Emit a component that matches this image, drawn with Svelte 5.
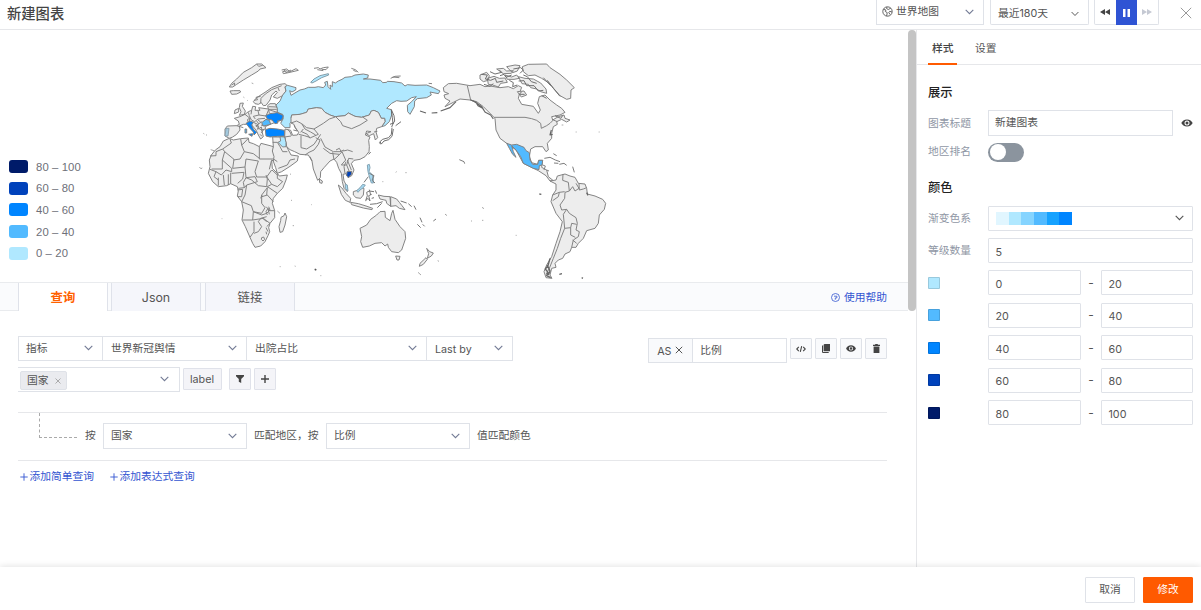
<script>
  const legend = [
    ['#001b69', '80 – 100'],
    ['#0042bb', '60 – 80'],
    ['#0085ff', '40 – 60'],
    ['#52baff', '20 – 40'],
    ['#b0e8ff', '0 – 20']
  ];
  const ramp = ['#e1f6ff', '#b0e8ff', '#85d4ff', '#52baff', '#16a2ff', '#0085ff'];
  const levels = [
    ['#b0e8ff', 0, 20],
    ['#52baff', 20, 40],
    ['#0085ff', 40, 60],
    ['#0042bb', 60, 80],
    ['#001b69', 80, 100]
  ];
</script>

{#snippet chevron(color = '#737b95')}
  <svg class="chev" width="9" height="6" viewBox="0 0 9 6" fill="none" stroke={color} stroke-width="1.1"><path d="M.7.8 4.5 4.7 8.3.8" /></svg>
{/snippet}

{#snippet eye()}
  <svg width="12" height="8" viewBox="0 0 12 8"><path fill="#444" fill-rule="evenodd" d="M6 .5C3.2.5 1.2 2.2.3 4c.9 1.8 2.9 3.5 5.7 3.5S10.800 5.800 11.700 4C10.800 2.200 8.800.5 6 .5ZM6 1.500a2.500 2.500 0 1 1 0 5 2.500 2.500 0 0 1 0-5Z" /><circle cx="6" cy="4" r="1.500" fill="#444" /></svg>
{/snippet}

<div class="page">
  <header>
    <h1>新建图表</h1>
    <div class="pick world">
      <svg width="11" height="11" viewBox="0 0 11 11" fill="none" stroke="#555" stroke-width=".9"><circle cx="5.500" cy="5.500" r="4.700" /><path d="M1.400 3.300 4 4.100 3.300 5.500 5.200 6.600 4.700 10M5 1 4.600 2.600 6.300 3.500 8.700 2.200M10 6 7.700 5.300 6.800 6.500 8 8.500" /></svg>
      <span>世界地图</span>{@render chevron()}
    </div>
    <div class="pick range"><span>最近180天</span>{@render chevron('#555')}</div>
    <div class="player">
      <i><svg width="10" height="6" viewBox="0 0 10 6" fill="#444"><path d="M5 0V6L0 3ZM10 0V6L5 3Z" /></svg></i>
      <i class="on"><svg width="7" height="8" viewBox="0 0 7 8" fill="#fff"><path d="M0 0H2.500V8H0ZM4.500 0H7V8H4.500Z" /></svg></i>
      <i><svg width="10" height="6" viewBox="0 0 10 6" fill="#c5c9d3"><path d="M0 0 5 3 0 6ZM5 0 10 3 5 6Z" /></svg></i>
    </div>
    <svg class="close" width="12" height="12" viewBox="0 0 12 12" stroke="#999" stroke-width="1"><path d="M.8.800 11.200 11.200M11.200.800.8 11.200" /></svg>
  </header>

  <div class="body">
    <main>
      <section class="chart">
        <ul class="legend">
          {#each legend as [color, text]}
            <li><b style="background:{color}"></b>{text}</li>
          {/each}
        </ul>
        <svg class="map" width="430" height="227" viewBox="0 0 1290 681" fill="#ededed" stroke="#808080" stroke-width="2.900" stroke-linejoin="round">
          <!-- Europe -->
          <path d="M118 96 125 85 140 72 160 52 185 38 200 27 215 27 228 38 210 42 205 48 185 60 160 75 140 88 128 96ZM200 27 206 34 218 31M125 90 134 84 133 91M120 108 130 107 150 107 152 111 140 117 125 118Z" />
          <path fill="none" d="M275 45 290 42 300 50 318 41 325 46 300 52 280 56 278 50 292 47M282 45 288 53 303 45M372 40 385 38 390 42 400 38 415 36 408 44 395 43M382 44 400 47" />
          <path d="M190 140 200 128 225 112 245 98 270 88 285 86 292 92 285 96 288 108 278 122 262 130 250 126 262 112 258 108 245 120 240 135 228 151 220 152 214 143 205 148 195 146Z" />
          <path fill="none" d="M212 144 213 130 226 117 245 104 263 97 275 92M264 98 268 108M192 136 203 134 198 127 212 124" />
          <path d="M150 145 160 144 157 154 166 168 163 178 148 181 153 170 148 158ZM135 165 146 160 146 171 133 176Z" />
          <path d="M105 243 105 222 112 213 140 212 148 208 145 198 133 190 150 185 165 178 175 170 185 166 188 154 197 155 195 166 210 166 206 158 235 162 233 152 240 146 256 146 262 160 262 172 280 182 276 195 240 208 226 215 226 222 215 225 220 245 212 252 205 240 198 225 185 210 178 203 168 208 160 208 148 213 150 225 140 238 128 246 118 250Z" />
          <path fill="none" d="M140 212 160 218M165 178 180 190 176 203M175 172 178 182 184 195 194 200 204 192 225 190M185 166 183 178M204 167 207 180 190 184 196 192M207 180 228 183 236 164 262 172M236 155 260 156M235 163 260 163M190 202 203 208 216 200M203 208 205 222 214 216 216 226M204 195 212 201M196 210 206 214 202 224M213 210 225 213M208 222 220 226 214 234M210 238 216 244M236 164 238 175M179 190 173 193 173 200M200 198 206 206 198 216" />
          <path fill="#b0e8ff" stroke="#7e98a5" d="M362 82 372 72 390 62 415 56 416 60 395 68 378 78 366 84Z" />
          <path fill="#b0e8ff" d="M285 95 292 91 300 93 318 98 317 105 306 111 299 107 303 121 318 112 330 105 343 102 355 97 375 97 385 95 400 98 407 90 404 82 412 79 414 95 422 103 420 90 427 95 427 80 436 84 445 78 456 73 465 67 484 65 495 60 520 57 535 60 533 69 520 72 540 72 572 76 578 83 590 82 592 79 612 80 635 84 645 93 652 89 675 91 710 90 730 98 750 108 745 116 720 111 724 120 710 128 682 131 674 138 673 155 660 178 653 170 652 151 665 140 679 125 665 128 650 138 633 139 620 137 605 145 590 160 604 164 605 180 598 200 585 212 575 215 585 200 584 190 574 190 565 172 552 166 544 168 538 180 515 187 495 184 475 174 465 182 435 185 420 180 405 172 395 160 380 158 355 162 350 172 330 178 305 180 303 190 310 195 300 205 300 218 285 218 272 205 280 190 278 178 262 172 262 160 258 150 270 138 278 120 288 108Z" />
          <path fill="none" d="M602 70 615 64 632 63M608 66 628 68M484 40 496 44 505 52M490 46 500 50M716 85 726 86" />
          <path fill="#0085ff" d="M168 205 180 198 190 202 185 210 190 222 200 232 192 240 190 231 178 218 172 210ZM176 238 188 236 186 244ZM227 182 240 176 262 173 280 182 275 195 262 198 264 204 255 206 246 195 232 192ZM226 224 240 220 262 222 283 226 284 243 262 244 240 246 228 243Z" />
          <path fill="#52baff" d="M215 203 228 193 238 196 242 208 220 213ZM165 222 170 222 170 234 165 234Z" />
          <path fill="#a4cbe0" stroke="#8ba0ac" d="M105 243 108 220 117 220 114 243Z" />
          <!-- Asia -->
          <path d="M285 222 302 226 308 241 322 240 326 232 316 218 312 208 303 204 303 190 305 180 330 178 350 172 355 162 380 158 395 160 405 172 420 180 435 185 465 182 475 174 495 184 515 187 538 180 544 168 552 166 565 172 574 190 584 190 585 200 575 215 560 220 558 231 563 248 556 255 551 236 538 242 528 236 543 230 530 228 526 240 540 246 536 256 538 275 537 290 525 305 510 313 492 316 484 326 492 345 485 362 474 368 468 356 459 358 462 378 472 396 472 410 462 400 457 380 454 355 446 340 440 322 432 312 420 318 402 338 392 350 391 368 383 376 370 342 366 318 355 300 330 298 314 290 300 284 290 275 284 246Z" />
          <path d="M248 246 284 246 290 275 303 300 325 303 322 318 300 334 275 350 262 355 257 338 246 308 243 285 250 275Z" />
          <path fill="#b0e8ff" d="M270 245 284 246 288 262 288 275 278 276 264 262 272 258Z" />
          <path fill="none" d="M438 186 452 200 458 212 485 221 510 210 532 196 518 186M303 204 320 198 335 206 350 218 372 222 400 205 418 192 436 186M326 238 343 242 362 248 385 238 372 222M335 206 345 222 362 231 377 240M333 242 333 278 350 282 372 268 384 250 392 238M345 300 357 292 372 285 385 268 390 255 377 248M392 250 405 276 430 290 450 290 462 285M400 280 420 295 448 298M366 318 360 305M428 292 432 314 444 303 456 290 467 315 454 330M460 288 473 285 488 290M454 330 470 330 476 310 490 312M468 320 462 335 465 355M472 315 478 330 484 345M470 330 478 350M248 262 262 262 270 275 278 290 292 290M245 308 262 320M265 340 292 330 300 315 315 312M284 246 303 243M310 225 322 228 312 212M292 222 300 231 305 242M335 230 352 238 360 250M340 222 332 232M552 231 562 229M438 285 448 280 455 292" />
          <path fill="none" stroke="#6a6a6a" d="M604 164 612 182 614 198 609 206 607 188ZM600 208 610 204 605 216M606 218 604 238 596 248 578 253 570 260 574 267 582 258 596 254 606 244 610 222M568 262 572 268M617 212 633 200M536 298 542 291" />
          <!-- Africa -->
          <path d="M118 250 130 255 152 251 175 249 177 262 190 266 208 275 213 265 240 272 250 275 247 288 252 305 250 318 245 315 247 340 262 355 268 363 292 360 288 375 278 400 262 415 250 430 247 445 254 467 254 488 240 505 236 518 239 530 234 542 225 560 212 573 195 577 188 565 180 547 166 515 156 495 160 465 155 440 142 423 145 407 142 395 122 386 110 392 85 395 68 380 55 355 60 335 58 315 64 300 76 285 90 275 100 258Z" />
          <path fill="none" d="M120 252 124 264 98 282 78 290M98 282 104 290 132 313M78 290 78 302 60 303M152 252 155 270 163 290 150 312 130 315M175 250 162 264 155 270M163 290 190 296 208 310M208 275 208 312H250M132 313 128 340 165 336 168 312 205 318 195 350 200 366 230 366 245 345M104 290 97 315 97 342 65 342M60 343 78 350 94 360 108 345 125 350 125 340 97 315M78 350 72 365 85 375M85 368 85 392M100 360 103 390M115 358 115 390M122 353 122 386M125 355 162 352 158 372 143 385M165 336 168 368 160 382 163 398 145 400M168 368 195 365 202 380 170 390 163 398M168 368 185 375 205 392 230 395 232 372 228 360M230 365 245 388 262 395 278 380 262 370 262 355M245 388 232 395 240 400 262 415M170 390 165 420 155 440 184 452 190 470 215 475 225 458 215 445 215 420 232 398M216 425 232 420 250 440M232 398 230 420M228 455 240 467 254 467M190 470 188 495 158 495M190 470 215 480 230 475 240 465 236 455M188 495 220 490 240 505 230 515M192 500V530L180 547M192 535 205 530 215 515 205 500M205 500 212 490 230 485M228 518 234 530M218 490 230 500M142 405 158 403 155 425 143 425M215 548 221 546 224 553 219 558 214 553ZM228 530 230 538M244 318 238 343M232 480 228 470 234 460 238 478M216 420 212 430M246 345 262 360" />
          <path d="M285 474 290 485 285 510 278 530 270 532 267 515 272 497 273 487 282 482ZM388 372 397 378 396 385 389 383Z" />
          <!-- Maritime Asia and Oceania -->
          <path d="M445 390 455 398 468 415 482 430 480 442 466 436 454 418ZM482 442 505 446 525 452 548 460 546 464 520 459 485 449ZM490 410 505 405 512 398 522 400 520 420 512 430 498 428 490 420Z" />
          <path d="M565 420 582 424 600 425 602 454 590 445 588 436 570 432ZM602 425 620 432 628 442 636 452 645 464 628 460 618 452 602 454Z" />
          <path fill="#a5d9f2" stroke="#83a2b1" d="M532 330 538 328 540 338 537 350 546 358 550 370 550 384 544 384 540 372 534 350ZM466 388 472 390 474 408 466 400ZM500 407 510 398 518 388 526 390 520 398 510 405 504 412Z" />
          <path fill="#0042bb" d="M471 350 485 349 484 358 476 367 470 362Z" />
          <path fill="none" stroke="#777" stroke-width="3" d="M530 412 538 408 552 410M530 412 532 422 527 437 534 430 540 438 536 422 545 418M556 406 560 416M538 404 542 420M545 430 552 428M540 448 560 446 578 440M562 458 575 445M522 382 535 365M538 355 552 362 546 376 555 384M632 438 650 444M655 446 665 455M672 452 678 464M690 488 696 502M698 508 704 514M682 508 692 518M730 498 738 492M766 478 770 481" />
          <path d="M510 520 530 510 542 493 560 480 570 470 585 469 586 487 600 497 605 475 609 466 615 493 630 515 645 530 647 550 635 585 625 593 605 590 595 577 593 567 585 573 575 563 555 565 538 573 518 577 512 560 515 545ZM617 603 630 604 627 615 621 615ZM710 580 719 590 730 594 724 603 712 610 716 596ZM708 608 712 613 700 628 688 634 690 625Z" />
          <!-- North America -->
          <path d="M760 98 775 86 800 85 840 92 870 88 885 95 900 93 930 98 955 95 970 101 985 92 995 97 990 110 985 130 995 148 1030 154 1045 175 1051 165 1043 145 1048 125 1065 120 1080 135 1100 150 1115 160 1125 172 1110 180 1085 185 1088 195 1105 185 1122 180 1125 190 1140 195 1130 201 1115 193 1100 200 1102 208 1090 215 1085 235 1085 250 1072 265 1075 285 1068 290 1058 275 1035 275 1022 282 1018 305 1025 323 1043 328 1046 316 1058 316 1055 337 1070 345 1075 365 1090 377 1080 378 1068 362 1045 347 1000 325 978 285 950 265 930 250 918 225 915 190 905 180 880 155 860 140 840 135 810 132 790 142 765 155 780 138 765 130 762 120 776 116 762 110Z" />
          <path fill="#52baff" d="M950 265 965 270 980 268 1002 277 1008 287 1018 293 1020 315 1028 328 1043 328 1046 316 1058 316 1056 330 1048 332 1047 344 1030 340 1000 325 992 305 978 285 965 272 970 290 978 307 968 298 958 280Z" />
          <path fill="none" d="M832 92 842 135 860 142M913 187H1005L1025 191 1040 196 1052 205 1054 220 1070 212 1080 205 1090 195 1102 200M1058 330 1066 333 1062 345M1070 345 1077 348" />
          <path stroke="#666" fill="none" stroke-width="3.500" d="M842 135 858 142 864 152 878 160 886 172 902 180 910 192M850 138 865 148 875 155 882 166M690 168 708 174M725 174 742 173M752 168 780 158 798 140M1084 225 1080 240 1088 238" />
          <path d="M997 35 1015 28 1070 27 1080 38 1110 58 1130 75 1153 98 1143 105 1142 130 1130 133 1110 122 1095 105 1078 85 1055 70 1035 60 1015 62 1000 50Z" />
          <path d="M870 60 890 52 898 62 894 76 880 80 870 72ZM892 70 912 64 928 70 945 69 952 82 932 85 925 96 908 90 895 88ZM920 42 940 40 950 48 970 47 964 55 940 56ZM950 35 975 30 990 32 982 48 968 53 958 44ZM945 60 965 66 980 60 988 70 972 73 952 73ZM985 65 1005 70 1030 72 1052 84 1068 102 1070 115 1052 110 1040 102 1022 98 1015 88 996 86ZM982 110 1002 108 1010 120 994 126Z" />
          <path fill="none" stroke="#6b6b6b" d="M874 58 892 60 886 72 902 76 916 70 920 82 940 78M900 50 915 57 935 52 928 45M930 62 942 58 948 67 965 60M958 76 970 83 968 95 982 90M970 42 992 38 1000 45 990 55M986 78 1002 77 1010 92 1032 92 1045 108 1060 106M995 110 988 118 1004 118M1055 122 1070 130M882 88 900 94 910 86M1000 60 1012 65 1024 80 1040 85M1060 68 1082 92M1072 76 1090 100 1110 124M1095 182 1112 190 1118 182" />
          <path fill="none" stroke="#777" d="M1063 310 1080 307 1096 315 1110 320M1090 296 1100 302M1092 324 1105 325M1108 328 1122 325 1130 331M1148 335 1153 352M808 314 822 320 824 326" />
          <!-- South America -->
          <path d="M1098 375 1102 363 1125 357 1140 363 1155 367 1165 385 1185 387 1190 400 1192 417 1215 423 1238 433 1247 445 1243 463 1228 480 1225 505 1215 520 1190 527 1180 550 1165 565 1158 577 1145 577 1140 590 1125 597 1118 610 1105 615 1095 625 1098 637 1085 640 1080 660 1086 670 1068 668 1062 650 1070 630 1085 605 1098 565 1110 530 1117 500 1098 475 1083 440 1088 420 1098 405 1098 387 1080 378Z" />
          <path fill="none" d="M1119 357 1118 376 1135 382 1138 408 1125 412 1124 430 1110 450 1115 465 1130 463 1138 475 1158 488 1162 505 1158 525 1168 530 1165 545 1150 555 1145 577M1088 420 1108 412 1124 410M1088 437 1105 425 1108 412M1138 408 1148 395 1155 408 1167 400 1158 385M1167 385 1168 405 1180 402M1190 398 1180 402M1130 463 1120 478 1124 520 1112 550 1102 580 1090 610 1078 640 1068 658M1124 520 1142 518 1142 540 1156 547M1142 518 1145 505 1160 508M1148 555 1160 565" />
          <path fill="none" stroke="#666" stroke-width="4" d="M1080 610 1074 632 1066 642 1074 652 1070 662 1082 668M1072 630 1080 648 1075 660M1190 413 1194 421M1108 658 1116 656M1175 668 1179 670M1048 417 1054 418" />
          <!-- Small islands -->
          <path fill="none" stroke="#aaa" stroke-width="3" d="M40 235 43 237M48 239 51 241M62 284 72 287M28 336 34 342 36 338M262 468 270 475M300 357 303 358M303 436H306M308 512H312M364 449H366M269 635H272M314 633 317 634M391 662H394M95 491H97M160 126 163 128M185 84 190 86M172 137 174 135M617 352 620 350M577 380H580M646 353H650M843 498H846M876 496 880 496M1157 231H1160M1226 231H1229M977 541H980M743 617 747 619M684 652 693 660M876 457 882 461M1115 210H1120" />
          <path fill="none" stroke="#555" stroke-width="5" d="M374 643 379 645" />
        </svg>
      </section>

      <nav class="tabs">
        <span class="tab active">查询</span><span class="tab">Json</span><span class="tab">链接</span>
        <span class="help"><svg width="9" height="9" viewBox="0 0 9 9" fill="none" stroke="#3355d1" stroke-width=".8"><circle cx="4.500" cy="4.500" r="4" /><path d="M3 3.200H5.900V4.900H4.300V6.700" /></svg>使用帮助</span>
      </nav>

      <section class="query">
        <div class="line">
          <div class="sel" style="width:85px"><span>指标</span>{@render chevron()}</div>
          <div class="sel" style="width:145px"><span>世界新冠舆情</span>{@render chevron()}</div>
          <div class="sel" style="width:181px"><span>出院占比</span>{@render chevron()}</div>
          <div class="sel lat" style="width:87px"><span>Last by</span>{@render chevron()}</div>
          <div class="alias">
            <span class="as">AS <svg width="8" height="8" viewBox="0 0 8 8" stroke="#555" stroke-width="1"><path d="M.8.800 7.200 7.200M7.200.800.8 7.200" /></svg></span><span class="name">比例</span>
          </div>
          <div class="tools">
            <i><svg width="10" height="6" viewBox="0 0 10 6" fill="none" stroke="#444" stroke-width="1.100"><path d="M2.800.8.700 3 2.800 5.200M7.200.800 9.300 3 7.200 5.200M5.700.2 4.300 5.800" /></svg></i>
            <i><svg width="8" height="9" viewBox="0 0 8 9" fill="#444"><path d="M2.500 0H8V7.200H1.600V.8ZM0 1.500H1V7.900H6.700V9H.8L0 8.300Z" /></svg></i>
            <i><svg width="10" height="7" viewBox="0 0 12 8"><path fill="#444" fill-rule="evenodd" d="M6 .2C3 .2 1 2.200.1 4 1 5.800 3 7.800 6 7.800S11 5.800 11.900 4C11 2.200 9 .2 6 .2ZM6 1.500a2.500 2.500 0 1 1 0 5 2.500 2.500 0 0 1 0-5Z" /><circle cx="6" cy="4" r="1.500" fill="#444" /></svg></i>
            <i><svg width="7" height="9" viewBox="0 0 7 9" fill="#444"><path d="M2.200 0H4.800V.8H7V2H0V.8H2.200ZM.6 2.600H6.400V9H.6Z" /></svg></i>
          </div>
        </div>
        <div class="line second">
          <div class="sel tags"><span class="tag">国家<svg width="6" height="6" viewBox="0 0 6 6" stroke="#999" stroke-width=".8"><path d="M.5.500 5.500 5.500M5.500.500.5 5.500" /></svg></span>{@render chevron()}</div>
          <span class="mini label">label</span>
          <span class="mini filter"><svg width="8" height="8" viewBox="0 0 8 8" fill="#444"><path d="M0 0H8V1.200L5.200 4V8L2.800 6.800V4L0 1.200Z" /></svg></span>
          <span class="mini"><svg width="8" height="8" viewBox="0 0 8 8" stroke="#444" stroke-width="1.400"><path d="M4 0V8M0 4H8" /></svg></span>
        </div>
        <div class="match">
          <span class="elbow"></span>
          <span class="by">按</span>
          <div class="sel"><span>国家</span>{@render chevron()}</div>
          <span class="mid">匹配地区，按</span>
          <div class="sel"><span>比例</span>{@render chevron()}</div>
          <span class="end">值匹配颜色</span>
        </div>
        <div class="links">
          {#each ['添加简单查询', '添加表达式查询'] as t}
            <span><svg width="8" height="8" viewBox="0 0 8 8" stroke="#3355d1" stroke-width=".9"><path d="M4 .3V7.700M.3 4H7.700" /></svg>{t}</span>
          {/each}
        </div>
      </section>
    </main>
    <div class="track"><div class="thumb"></div></div>

    <aside>
      <nav><span class="cur">样式</span><span>设置</span></nav>
      <h2>展示</h2>
      <div class="row title"><span class="lb">图表标题</span><div class="box">新建图表</div>{@render eye()}</div>
      <div class="row rank"><span class="lb">地区排名</span><div class="toggle"></div></div>
      <h2 class="h-color">颜色</h2>
      <div class="row scheme"><span class="lb">渐变色系</span>
        <div class="box"><div class="ramp">{#each ramp as c}<b style="background:{c}"></b>{/each}</div>{@render chevron('#555')}</div>
      </div>
      <div class="row count"><span class="lb">等级数量</span><div class="box num">5</div></div>
      <div class="levels">
        {#each levels as [c, a, b]}
          <div class="level"><b style="background:{c}"></b><div class="box num from">{a}</div><em>-</em><div class="box num">{b}</div></div>
        {/each}
      </div>
    </aside>
  </div>

  <footer><button>取消</button><button class="ok">修改</button></footer>
</div>

<style>
  :global(body) { background: #fff; }
  .page, .page * { box-sizing: border-box; }
  .page { width: 1201px; height: 610px; display: flex; flex-direction: column; overflow: hidden; background: #fff; color: #555; font: 10.75px/16px Inter, "Noto Sans CJK SC", sans-serif; }
  svg { display: block; flex: none; }
  i, em { font-style: normal; }
  header { height: 30px; flex: none; display: flex; align-items: flex-start; border-bottom: 1px solid #e6e7ea; padding-right: 9px; }
  h1 { margin: 3px auto 0 7px; font-size: 14.3px; line-height: 22px; font-weight: 500; color: #444; }
  .pick { display: flex; align-items: center; height: 25px; border: 1px solid #dfe2e8; border-top: 0; }
  .world { width: 108px; padding: 0 9px 1px 5px; gap: 3px; }
  .world > svg:first-child { margin-top: -1px; }
  .world .chev, .range .chev { margin-left: auto; }
  .range { width: 99px; margin-left: 6px; padding: 3px 9px 0 7px; border-radius: 0 0 2px 2px; }
  .range .chev { width: 8px; }
  .player { display: flex; margin-left: 5px; width: 65px; height: 25px; border: 1px solid #dfe2e8; border-top: 0; border-radius: 0 0 2px 2px; }
  .player i { flex: 1; display: grid; place-items: center; }
  .player .on { background: #2f54d4; margin-bottom: -1px; }
  .player i:not(.on) svg { margin-right: 1px; }
  .close { margin: 7px 0 0 21px; }

  .body { flex: 1; min-height: 0; display: flex; }
  main { width: 908px; }
  .chart { height: 252px; display: flex; overflow: hidden; }
  .legend { width: 190px; margin: 126px 0 0; padding: 0 0 0 9px; list-style: none; }
  .legend li { height: 21.6px; display: flex; align-items: center; font: 11.3px "Liberation Sans", sans-serif; letter-spacing: .1px; color: #6e7079; }
  .legend b { width: 19px; height: 13px; border-radius: 3px; margin-right: 8px; }
  .map { margin-top: 25px; }

  .tabs { height: 29px; display: flex; padding: 0 21px 0 18px; background: #fafbfd; border: solid #e9ebee; border-width: 1px 0; }
  .tab { width: 90px; height: 28px; margin-right: 4px; border: solid #dfe2ea; border-width: 0 1px; background: #f5f6fb; text-align: center; font-size: 12.4px; line-height: 29px; color: #555; }
  .tab.active { margin-right: 3px; background: #fff; color: #ff6200; font-weight: 700; }
  .help { margin-left: auto; display: flex; align-items: center; gap: 4px; padding-top: 2px; color: #3355d1; }
  .help svg { margin-top: -1px; }

  .query { padding: 25px 21px 0 18px; }
  .line { display: flex; height: 25px; }
  .sel { height: 25px; border: 1px solid #dfe2e8; display: flex; align-items: center; padding: 0 9px 1px 7px; justify-content: space-between; white-space: nowrap; }
  .sel > span { padding-top: 1px; }
  .line .sel + .sel { margin-left: -1px; padding-left: 8px; }
  .sel .chev { flex: none; }
  .sel.lat > span { padding-top: 3px; }
  .alias { margin: 2px 3px 0 auto; display: flex; height: 25px; }
  .alias span { display: flex; align-items: center; border: 1px solid #dfe2e8; }
  .as { width: 45px; padding-left: 8px; gap: 4px; background: #f9fafc; padding-top: 2px; white-space: nowrap; letter-spacing: -.1px; }
  .as svg { margin-top: -3px; }
  .name { width: 95px; padding: 0 6px; }
  .alias .name { margin-left: -1px; padding-left: 7px; }
  .tools { display: flex; gap: 3.5px; padding-top: 2px; }
  .tools i { width: 21.6px; height: 21px; display: grid; place-items: center; border: 1px solid #dfe2e8; border-radius: 1px; background: #f9fafc; }
  .second { margin-top: 6px; }
  .sel.tags { width: 162px; border-left: 0; padding: 3px 10px 2px 2px; margin-right: 3px; }
  .tags .chev { margin-top: -3px; }
  .sel .tag { display: flex; align-items: center; gap: 6px; width: 47px; height: 19px; padding: 1px 0 0 6px; border: 1px solid #dfe2e8; border-radius: 2px; background: #eaebef; }
  .mini { width: 22px; height: 22px; margin-top: 1px; display: grid; place-items: center; border: 1px solid #e0e2ea; border-radius: 1px; background: #f4f4f8; }
  .label { width: 39px; padding: 1px 1px 0 0; }
  .filter { margin: 1px 3px 0 7px; }
  .match { margin-top: 20px; height: 49px; border: solid #e6e7ea; border-width: 1px 0; display: flex; align-items: center; padding-bottom: 1px; white-space: nowrap; }
  .elbow { align-self: flex-start; width: 38px; height: 25px; margin-left: 21px; border: dashed #aaa; border-width: 0 0 1px 1px; }
  .by { width: 26px; padding-left: 8px; }
  .match .sel { width: 144px; height: 26px; }
  .match .sel > span { padding-top: 0; }
  .mid { padding-left: 7px; width: 79px; }
  .end { padding-left: 7px; }
  .links { display: flex; gap: 16px; padding: 8px 0 0 2px; color: #3355d1; }
  .links span { display: flex; align-items: center; gap: 1.500px; }

  .track { width: 8px; }
  .thumb { height: 281px; border-radius: 4px; background: #c4c4c4; }

  aside { width: 285px; border-left: 1px solid #e6e7ea; }
  aside nav { height: 35px; display: flex; padding-left: 11px; border-bottom: 1px solid #e6e7ea; gap: 14px; }
  aside nav span { padding: 11px 3.500px 0 4px; height: 35px; }
  .cur { font-weight: 500; color: #444; border-bottom: 2px solid #ff5a00; }
  h2 { margin: 18px 0 0 11px; font-size: 12.3px; line-height: 20px; font-weight: 500; color: #222; }
  .row { display: flex; align-items: center; padding: 0 8px 0 11px; color: #9097a5; }
  .lb { flex: none; width: 60px; }
  .box { flex: 1; height: 25px; border: 1px solid #dfe2e8; padding: 0 7px; display: flex; align-items: center; color: #555; border-radius: 1px; }
  .title { margin-top: 7px; padding-right: 0; }
  .title .lb { padding-top: 1px; }
  .title .box { height: 26px; padding: 0 6px 1px; flex: none; width: 185px; margin-right: 8px; border-radius: 0; }
  .rank { margin-top: 7px; height: 18px; }
  .toggle { width: 36px; height: 19px; padding: 1.500px; border-radius: 10px; background: #8b949e; }
  .toggle::before { content: ""; display: block; width: 16px; height: 16px; border-radius: 50%; background: #fff; }
  .h-color { margin-top: 17px; }
  .scheme { margin-top: 8px; }
  .scheme .chev { margin: -2px 1px 0 0; }
  .ramp { display: flex; margin-right: auto; }
  .ramp b { width: 12.700px; height: 13px; }
  .count { margin-top: 7px; }
  .num { padding-top: 4px; padding-left: 6.500px; }
  .levels { padding: 7px 8px 0 11px; }
  .level { display: flex; align-items: center; margin-bottom: 7.500px; }
  .level > b { width: 12px; height: 12px; margin-right: 48px; border-radius: 1px; border: 1px solid #0002; }
  .level .from { flex: none; width: 93px; }
  .level em { width: 20px; text-align: center; font-size: 12px; }

  footer { height: 43px; flex: none; display: flex; justify-content: flex-end; gap: 8px; padding: 10px 8px 0 0; background: #fff; box-shadow: 0 -1px 6px #0000001c; position: relative; }
  button { width: 50px; height: 26px; padding: 0 0 1px; border: 1px solid #dfe2e8; border-radius: 1px; background: #fff; color: #555; font: inherit; }
  .ok { background: #ff5a00; border-color: #ff5a00; color: #fff; }
</style>
